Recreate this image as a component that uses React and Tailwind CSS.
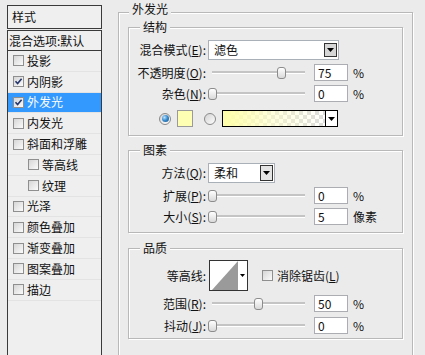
import React from 'react';

const Tri = () => (
  <svg width="7" height="4" viewBox="0 0 7 4"><path d="M0 0H7L3.5 4Z" fill="#000" /></svg>
);

function Check({ checked }) {
  return (
    <span className="w-[11px] h-[11px] shrink-0 border border-[#8f8f8f] bg-linear-to-br from-[#d6d6d6] to-[#fbfbfb] flex items-center justify-center">
      {checked && (
        <svg width="9" height="9" viewBox="0 0 9 9">
          <path d="M1.5 4.3L3.6 6.6L7.6 1.8" stroke="#24356b" strokeWidth="1.6" fill="none" />
        </svg>
      )}
    </span>
  );
}

function Label({ text, u }) {
  return (
    <span className="w-[77px] shrink-0 text-right whitespace-nowrap">
      {text}(<span className="underline underline-offset-1">{u}</span>):
    </span>
  );
}

function Slider({ v }) {
  const center = 4 + v * 0.93;
  return (
    <div className="relative w-[106px] h-full flex items-center shrink-0">
      <div className="ml-[4px] w-[93px] h-[2px] bg-[#c4c4c4] border-b border-white box-content" />
      <div
        className="absolute top-1/2 -translate-y-1/2 w-[9px] h-[12px] rounded-[3px] border border-[#8c8c8c] bg-linear-to-b from-white to-[#d9d9d9]"
        style={{ left: center - 4.5 }}
      />
    </div>
  );
}

function NumInput({ val }) {
  return (
    <div className="w-[34px] h-[17px] shrink-0 border border-[#abadb3] bg-white flex items-center pl-[3px]">
      {val}
    </div>
  );
}

function SliderRow({ text, u, v, val, unit = '%', cls }) {
  return (
    <div className={'flex items-center h-[17px] ' + cls}>
      <Label text={text} u={u} />
      <div className="w-[2px] shrink-0" />
      <Slider v={v} />
      <NumInput val={val} />
      <span className="ml-[5px] whitespace-nowrap">{unit}</span>
    </div>
  );
}

function Group({ title, cls, children }) {
  return (
    <div className={'relative border border-[#b8b8b8] shadow-[inset_1px_1px_0_#fff,1px_1px_0_#fff] ' + cls}>
      <span className="absolute left-[11px] -top-[8px] px-[3px] bg-[#ebebeb] leading-[14px]">{title}</span>
      {children}
    </div>
  );
}

function Radio({ on }) {
  return (
    <span className="w-[12px] h-[12px] shrink-0 rounded-full border border-[#8a8a8a] bg-linear-to-br from-[#d4d4d4] to-[#fdfdfd] flex items-center justify-center">
      {on && (
        <span className="w-[7px] h-[7px] rounded-full bg-[radial-gradient(circle_at_35%_35%,#bfe3ff_0%,#3a8fd0_45%,#134e86_100%)]" />
      )}
    </span>
  );
}

const items = [
  { t: '投影' },
  { t: '内阴影', c: true },
  { t: '外发光', c: true, sel: true },
  { t: '内发光' },
  { t: '斜面和浮雕' },
  { t: '等高线', sub: true },
  { t: '纹理', sub: true },
  { t: '光泽' },
  { t: '颜色叠加' },
  { t: '渐变叠加' },
  { t: '图案叠加' },
  { t: '描边' },
];

export default function App() {
  return (
    <div className="w-[425px] h-[355px] overflow-hidden bg-[#ebebeb] flex text-[12px] leading-none text-[#111] font-['Noto_Sans_CJK_SC','Noto_Sans',sans-serif]">
      {/* Left panel */}
      <div className="w-[102px] shrink-0 pl-[7px] pt-[5px] flex flex-col">
        <div className="h-[24px] border border-[#3a3a3a] bg-[#efefef] flex items-center pl-[4px]">样式</div>
        <div className="mt-[1px] h-[21px] border border-[#3a3a3a] bg-[#efefef] flex items-center pl-[1px] whitespace-nowrap">混合选项:默认</div>
        <div className="flex-1 border-x border-[#3a3a3a] bg-[#efefef] flex flex-col">
          {items.map((it) => (
            <div
              key={it.t}
              className={
                'h-[20.8px] shrink-0 flex items-center gap-[3px] border-b border-[#e3e3e3] ' +
                (it.sub ? 'pl-[20px] ' : 'pl-[5px] ') +
                (it.sel ? 'bg-[#3399ff] text-white' : '')
              }
            >
              <Check checked={it.c} />
              <span>{it.t}</span>
            </div>
          ))}
        </div>
      </div>

      {/* Right area */}
      <div className="pl-[16px] pt-[12px]">
        <div className="relative w-[295px] h-[360px] border border-[#b8b8b8] shadow-[inset_1px_1px_0_#fff,1px_1px_0_#fff] pt-[14px] px-[9px]">
          <span className="absolute left-[10px] -top-[11px] px-[3px] bg-[#ebebeb] leading-[14px]">外发光</span>

          {/* 结构 */}
          <Group title="结构" cls="h-[109px] pt-[12px]">
            <div className="flex items-center h-[20px]">
              <Label text="混合模式" u="E" />
              <div className="w-[2px] shrink-0" />
              <div className="w-[131px] h-[20px] border border-[#a9b0b8] bg-white flex items-center pl-[5px]">
                <span className="flex-1">滤色</span>
                <span className="w-[13px] h-[14px] mr-[1px] border border-[#333] bg-[#d6d6d6] flex items-center justify-center">
                  <Tri />
                </span>
              </div>
            </div>
            <SliderRow text="不透明度" u="O" v={75} val="75" cls="mt-[4px]" />
            <SliderRow text="杂色" u="N" v={0} val="0" cls="mt-[4px]" />
            <div className="flex items-center h-[17px] mt-[8px]">
              <div className="w-[30px] shrink-0" />
              <Radio on />
              <div className="ml-[6px] w-[16px] h-[17px] shrink-0 border border-[#9a9a9a] bg-[#ffffb4]" />
              <div className="ml-[11px] shrink-0"><Radio /></div>
              <div className="ml-[6px] w-[116px] h-[17px] shrink-0 border border-black flex">
                <div className="flex-1 bg-[image:conic-gradient(#dcdcdc_25%,#fff_0_50%,#dcdcdc_0_75%,#fff_0)] bg-size-[8px_8px]">
                  <div className="w-full h-full bg-linear-to-r from-[#ffffa8] via-[#ffffc8]/60 to-transparent" />
                </div>
                <div className="w-[12px] border-l border-black bg-white flex items-center justify-center">
                  <Tri />
                </div>
              </div>
            </div>
          </Group>

          {/* 图素 */}
          <Group title="图素" cls="mt-[14px] h-[83px] pt-[12px]">
            <div className="flex items-center h-[20px]">
              <Label text="方法" u="Q" />
              <div className="w-[2px] shrink-0" />
              <div className="w-[67px] h-[20px] border border-[#a9b0b8] bg-white flex items-center pl-[5px]">
                <span className="flex-1">柔和</span>
                <span className="w-[13px] h-[16px] mr-[1px] border border-[#333] bg-[#e4e4e4] flex items-center justify-center">
                  <Tri />
                </span>
              </div>
            </div>
            <SliderRow text="扩展" u="P" v={0} val="0" cls="mt-[4px]" />
            <SliderRow text="大小" u="S" v={0} val="5" unit="像素" cls="mt-[4px]" />
          </Group>

          {/* 品质 */}
          <Group title="品质" cls="mt-[15px] h-[91px] pt-[11px]">
            <div className="flex items-center h-[31px]">
              <span className="w-[77px] shrink-0 text-right">等高线:</span>
              <div className="ml-[3px] w-[39px] h-[31px] shrink-0 border border-[#333] bg-white flex">
                <svg width="28" height="29" viewBox="0 0 28 29" className="shrink-0">
                  <polygon points="2,29 28,0 28,29" fill="#9a9a9a" />
                </svg>
                <div className="flex-1 flex items-center justify-center">
                  <svg width="5" height="3" viewBox="0 0 5 3"><path d="M0 0H5L2.5 3Z" fill="#000" /></svg>
                </div>
              </div>
              <div className="ml-[14px]"><Check /></div>
              <span className="ml-[4px] whitespace-nowrap">
                消除锯齿(<span className="underline underline-offset-1">L</span>)
              </span>
            </div>
            <SliderRow text="范围" u="R" v={50} val="50" cls="mt-[4px]" />
            <SliderRow text="抖动" u="J" v={0} val="0" cls="mt-[5px]" />
          </Group>
        </div>
      </div>
    </div>
  );
}
